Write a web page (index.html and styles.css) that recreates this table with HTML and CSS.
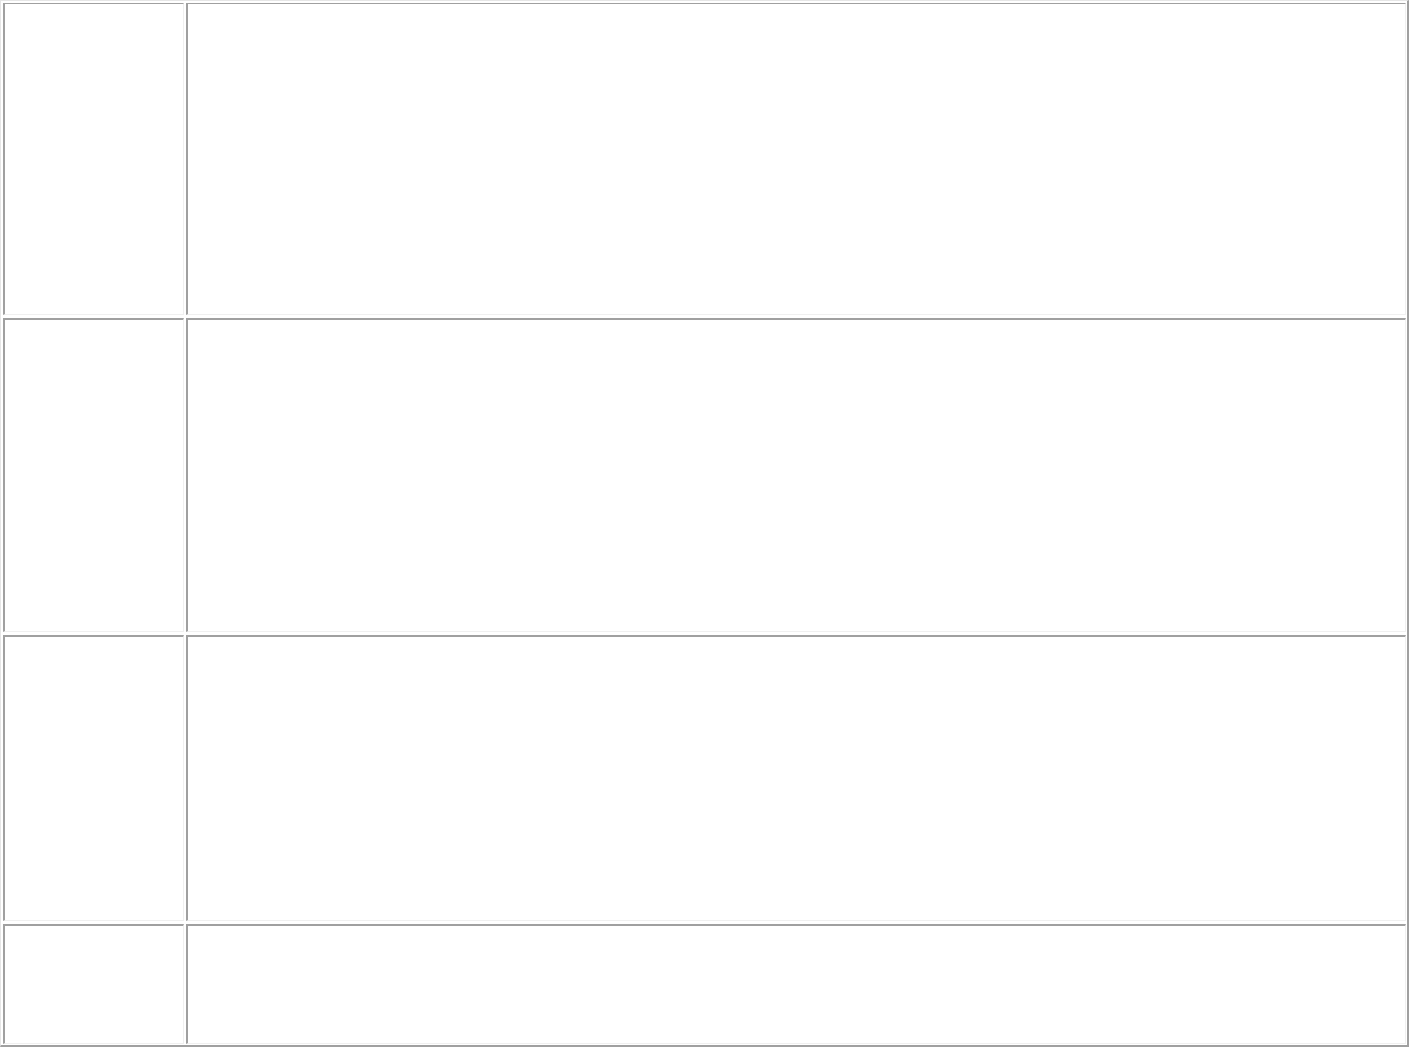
FILE: index.html
```html
<!DOCTYPE html>
<html>
<head>
<meta charset="utf-8">
<link rel="stylesheet" href="styles.css">
</head>
<body>
<div class="frame">
  <div class="cell first"></div>
  <div class="cell first"></div>
  <div class="cell"></div>
  <div class="cell"></div>
  <div class="cell"></div>
  <div class="cell"></div>
  <div class="cell"></div>
  <div class="cell"></div>
</div>
</body>
</html>
```
FILE: styles.css
```css
html, body {
  margin: 0;
  padding: 0;
  background: #ffffff;
}
.frame {
  box-sizing: border-box;
  width: 1409px;
  height: 1047px;
  display: grid;
  grid-template-columns: 181px 1220px;
  grid-template-rows: 312px 314px 286px 120px;
  column-gap: 2px;
  row-gap: 3px;
  padding: 2px 1px 1px 2px;
  border-style: solid;
  border-width: 1px 2px 2px 1px;
  border-color: #e6e6e6 #a0a0a0 #a0a0a0 #e6e6e6;
  overflow: hidden;
}
.cell {
  box-sizing: border-box;
  border-style: solid;
  border-width: 2px 1px 1px 2px;
  border-color: #a0a0a0 #f0f0f0 #f0f0f0 #a0a0a0;
}
.cell.first {
  border-top-width: 1px;
}
```
